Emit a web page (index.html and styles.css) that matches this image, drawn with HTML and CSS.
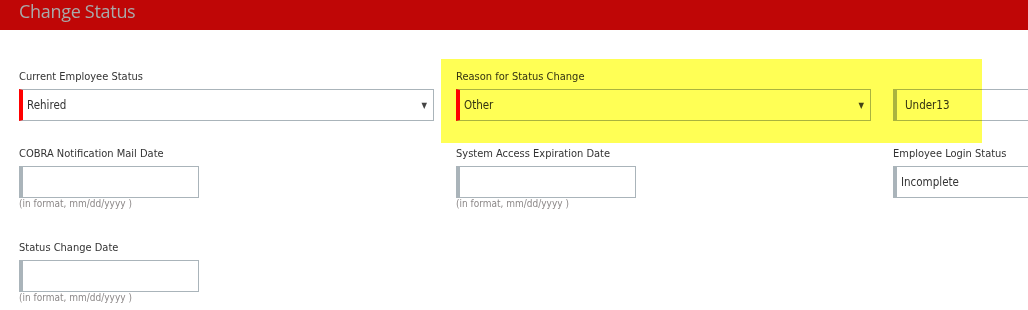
FILE: index.html
```html
<!DOCTYPE html>
<html lang="en">
<head>
<meta charset="utf-8">
<title>Change Status</title>
<link rel="stylesheet" href="styles.css">
</head>
<body>
<header class="titlebar">
  <h1 class="title">Change Status</h1>
</header>
<main class="form">
  <div class="grid">
    <div class="field">
      <label class="label">Current Employee Status</label>
      <div class="control select required">
        <span class="value">Rehired</span>
        <span class="arrow">&#9660;</span>
      </div>
    </div>
    <div class="field">
      <label class="label">Reason for Status Change</label>
      <div class="control select required">
        <span class="value">Other</span>
        <span class="arrow">&#9660;</span>
      </div>
    </div>
    <div class="field">
      <label class="label">&nbsp;</label>
      <div class="control wide-pad">
        <span class="value">Under13</span>
      </div>
    </div>

    <div class="field">
      <label class="label">COBRA Notification Mail Date</label>
      <div class="control date"></div>
      <div class="hint">(in format, mm/dd/yyyy )</div>
    </div>
    <div class="field">
      <label class="label">System Access Expiration Date</label>
      <div class="control date"></div>
      <div class="hint">(in format, mm/dd/yyyy )</div>
    </div>
    <div class="field">
      <label class="label">Employee Login Status</label>
      <div class="control">
        <span class="value">Incomplete</span>
      </div>
    </div>

    <div class="field">
      <label class="label">Status Change Date</label>
      <div class="control date"></div>
      <div class="hint">(in format, mm/dd/yyyy )</div>
    </div>
  </div>
  <div class="highlight"></div>
</main>
</body>
</html>
```

FILE: styles.css
```css
html, body {
  margin: 0;
  padding: 0;
  background: #ffffff;
  overflow: hidden;
}

body {
  width: 1028px;
  height: 310px;
  font-family: "DejaVu Sans Condensed", "DejaVu Sans", sans-serif;
  color: #333333;
}

.titlebar {
  height: 30px;
  background: #bf0606;
  display: flex;
  align-items: flex-start;
  padding-left: 19px;
}

.title {
  margin: 0;
  font-family: "Open Sans", "Noto Sans", sans-serif;
  font-weight: 400;
  font-size: 18px;
  line-height: 22px;
  color: #a9a9a9;
  letter-spacing: -0.3px;
}

.form {
  position: relative;
  padding: 40px 0 0 19px;
}

.grid {
  display: grid;
  grid-template-columns: 415px 415px 415px;
  column-gap: 22px;
  row-gap: 26px;
  align-items: start;
  width: 1300px;
}

.field {
  display: flex;
  flex-direction: column;
}

.label {
  font-size: 11px;
  line-height: 14px;
  height: 14px;
  margin-bottom: 5px;
  color: #333333;
}

.control {
  box-sizing: border-box;
  height: 32px;
  width: 415px;
  border: 1px solid #aab4ba;
  border-left: 4px solid #aab4ba;
  background: #ffffff;
  display: flex;
  align-items: center;
  padding: 0 6px 0 4px;
}

.control.required {
  border-left-color: #ff0000;
}

.control.wide-pad {
  padding-left: 8px;
}

.control.date {
  width: 180px;
}

.value {
  flex: 1;
  font-size: 11.5px;
  color: #333333;
}

.arrow {
  font-size: 8px;
  color: #444444;
}

.hint {
  font-size: 10px;
  line-height: 12px;
  padding-bottom: 5px;
  color: #8c8888;
}

.highlight {
  position: absolute;
  left: 441px;
  top: 29px;
  width: 541px;
  height: 84px;
  background: #ffff55;
  mix-blend-mode: multiply;
  pointer-events: none;
}
```
